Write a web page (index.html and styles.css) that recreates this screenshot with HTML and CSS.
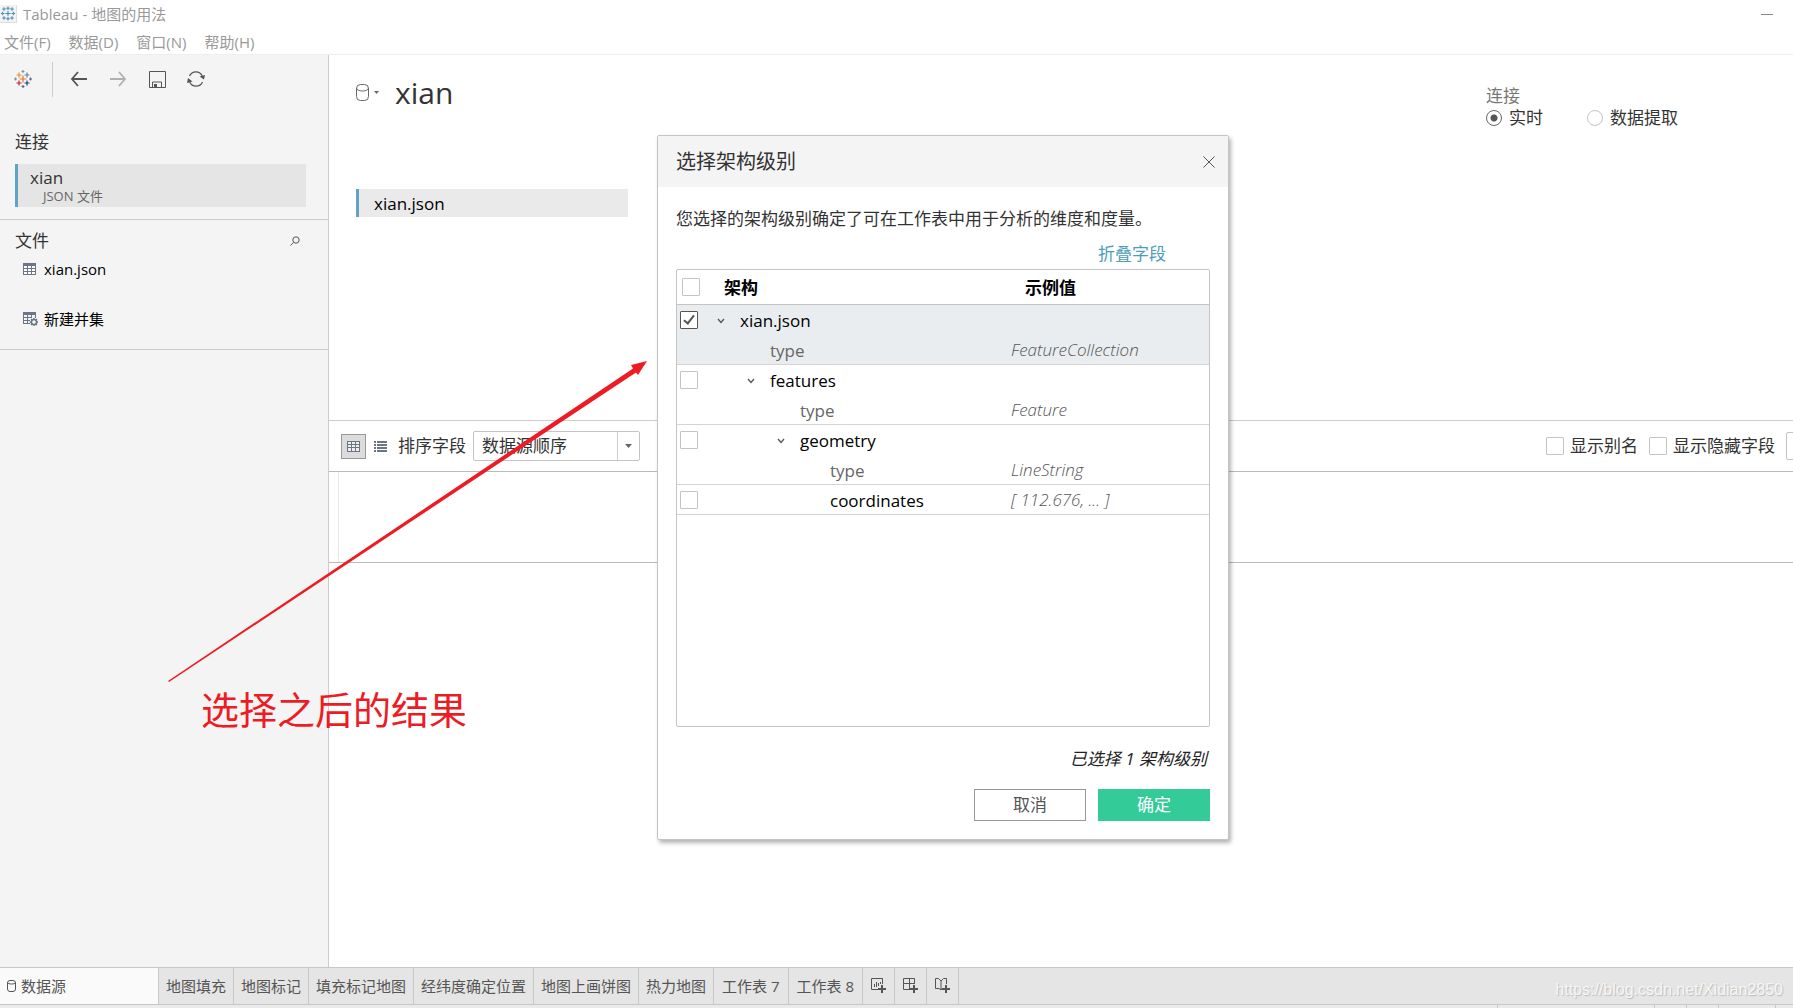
FILE: index.html
```html
<!DOCTYPE html>
<html lang="zh-CN">
<head>
<meta charset="utf-8">
<title>Tableau - 地图的用法</title>
<link rel="stylesheet" href="styles.css">
</head>
<body>
<svg class="defs" aria-hidden="true">
  <symbol id="plus-grid" viewBox="0 0 18 18"><path d="M9 6v6M6 9h6M9 1v4M7 3h4M9 13v4M7 15h4M3 7v4M1 9h4M15 7v4M13 9h4M4.500 2v4M2.500 4h4M13.500 2v4M11.500 4h4M4.500 12v4M2.500 14h4M13.500 12v4M11.500 14h4"/></symbol>
  <symbol id="table" viewBox="0 0 13 12"><path fill="currentColor" d="M0 0h13v12H0z"/><path fill="#fff" d="M1 3h3v2H1zM5 3h3v2H5zM9 3h3v2H9zM1 6h3v2H1zM5 6h3v2H5zM9 6h3v2H9zM1 9h3v2H1zM5 9h3v2H5zM9 9h3v2H9z"/></symbol>
  <symbol id="chevron" viewBox="0 0 8 6"><path fill="none" stroke="#555" stroke-width="1.300" d="M1 1l3 3.500L7 1"/></symbol>
</svg>
<div class="app">
  <header class="titlebar">
    <div class="caption">
      <svg class="app-icon" viewBox="0 0 18 18"><use href="#plus-grid"/></svg>
      <span>Tableau - 地图的用法</span>
      <button class="minimize" aria-label="最小化"></button>
    </div>
    <nav class="menu">
      <a href="#">文件(F)</a><a href="#">数据(D)</a><a href="#">窗口(N)</a><a href="#">帮助(H)</a>
    </nav>
  </header>

  <div class="workspace">
    <aside class="sidebar">
      <div class="tools">
        <button class="tool tool-home" aria-label="开始页面">
          <svg width="18" height="18" viewBox="0 0 18 18" fill="none" stroke-width="1.200">
            <path stroke="#eb912c" d="M5 2.500v5M2.500 5h5"/><path stroke="#e8762c" d="M9 5.500v7M5.500 9h7"/>
            <path stroke="#59879b" d="M13 2.500v5M10.500 5h5"/><path stroke="#c72035" d="M5 10.500v5M2.500 13h5"/>
            <path stroke="#1f447e" d="M13 10.500v5M10.500 13h5"/><path stroke="#7099a5" d="M9 0v3M7.500 1.500h3M1.500 7.500v3M0 9h3"/>
            <path stroke="#5b6591" d="M16.500 7.500v3M15 9h3M9 15v3M7.500 16.500h3"/>
          </svg>
        </button>
        <button class="tool" aria-label="后退"><svg width="18" height="16" viewBox="0 0 18 16" fill="none" stroke="#555" stroke-width="1.800"><path d="M8 1L2 8l6 7M2 8h15"/></svg></button>
        <button class="tool" aria-label="前进"><svg width="18" height="16" viewBox="0 0 18 16" fill="none" stroke="#b0b0b0" stroke-width="1.800"><path d="M10 1l6 7-6 7M16 8H1"/></svg></button>
        <button class="tool" aria-label="保存"><svg width="17" height="17" viewBox="0 0 17 17" fill="none" stroke="#555"><path d="M.5 .5h16v16H.5zM3.500 16v-5h9v5"/><path fill="#555" stroke="none" d="M5 13h3v3H5z"/></svg></button>
        <button class="tool" aria-label="刷新"><svg width="18" height="18" viewBox="0 0 18 18" fill="none" stroke="#555" stroke-width="1.200"><path d="M2.500 6a7 7 0 0 1 12.800 0M15.500 12a7 7 0 0 1-12.800 0"/><path fill="#555" stroke="none" d="M12.500 6.500L18 5l-1 4.500zM5.500 11.500L0 13l1-5z"/></svg></button>
      </div>
      <section class="connections">
        <h2>连接</h2>
        <a class="connection" href="#"><span class="connection-name">xian</span><span class="connection-type">JSON 文件</span></a>
      </section>
      <section class="files">
        <div class="files-head"><h2>文件</h2>
          <button class="search" aria-label="搜索"><svg width="10" height="10" viewBox="0 0 10 10" fill="none" stroke="#555"><circle cx="6" cy="4" r="3.200"/><path d="M3.500 6.500L.5 9.500"/></svg></button></div>
        <a class="file" href="#"><svg width="13" height="12"><use href="#table"/></svg>xian.json</a>
        <a class="file file-union" href="#"><svg width="15" height="14" viewBox="0 0 15 14"><path fill="#6b7585" d="M0 0h13v6h-1V3H9v2H8V3H5v2h4v1H5v2h2v1H5v2h2v1H0zM1 3v2h3V3zM1 6v2h3V6zM1 9v2h3V9z"/><circle cx="11" cy="10" r="2.600" fill="none" stroke="#6b7585" stroke-width="1.500"/><path stroke="#6b7585" stroke-width="1.300" d="M11 5.800v2M11 12.200v2M6.800 10h2M13.200 10h2M8 7l1.400 1.400M12.600 11.600L14 13M14 7l-1.400 1.400M8 13l1.400-1.400"/></svg>新建并集</a>
      </section>
    </aside>

    <main class="main">
      <section class="canvas">
        <div class="source">
          <div class="source-head">
            <button class="source-menu" aria-label="数据源"><svg width="24" height="18" viewBox="0 0 24 18" fill="none" stroke="#666"><rect x=".5" y=".5" width="12" height="16" rx="4"/><path d="M.5 4c0 4 12 4 12 0"/><path fill="#666" stroke="none" d="M18 7h5l-2.500 3z"/></svg></button>
            <h1>xian</h1>
          </div>
          <div class="source-table">xian.json</div>
        </div>
        <fieldset class="mode">
          <legend>连接</legend>
          <label><input type="radio" name="mode" checked>实时</label>
          <label><input type="radio" name="mode">数据提取</label>
        </fieldset>
      </section>
      <div class="gridbar">
        <button class="view view-on" aria-label="预览数据源"><svg width="13" height="11" viewBox="0 0 13 11"><path fill="#6b7585" d="M0 0h13v11H0z"/><path fill="#eee" d="M1 1h3v2H1zM5 1h3v2H5zM9 1h3v2H9zM1 4h3v2H1zM5 4h3v2H5zM9 4h3v2H9zM1 7h3v3H1zM5 7h3v3H5zM9 7h3v3H9z"/></svg></button>
        <button class="view" aria-label="管理元数据"><svg width="13" height="11" viewBox="0 0 13 11"><path fill="#6b7585" d="M0 0h2v2H0zM3 0h10v2H3zM0 3h2v2H0zM3 3h10v2H3zM0 6h2v2H0zM3 6h10v2H3zM0 9h2v2H0zM3 9h10v2H3z"/></svg></button>
        <label for="sort">排序字段</label>
        <span class="select"><select id="sort"><option>数据源顺序</option></select><svg width="7" height="4" viewBox="0 0 7 4"><path fill="#666" d="M0 0h7L3.500 4z"/></svg></span>
        <div class="options">
          <label><input type="checkbox">显示别名</label>
          <label><input type="checkbox">显示隐藏字段</label>
          <input class="rows" type="text" aria-label="行数">
        </div>
      </div>
      <div class="grid"></div>
    </main>
  </div>

  <footer>
    <nav class="tabs">
      <a class="tab tab-on" href="#"><svg width="9" height="12" viewBox="0 0 9 12" fill="none" stroke="#555"><rect x=".5" y=".5" width="8" height="11" rx="2.500"/><path d="M.5 2.500c0 2 8 2 8 0"/></svg>数据源</a>
      <a class="tab" href="#">地图填充</a><a class="tab" href="#">地图标记</a><a class="tab" href="#">填充标记地图</a><a class="tab" href="#">经纬度确定位置</a><a class="tab" href="#">地图上画饼图</a><a class="tab" href="#">热力地图</a><a class="tab tab-sheet" href="#">工作表 7</a><a class="tab tab-sheet" href="#">工作表 8</a>
      <button class="tab tab-new" aria-label="新建工作表"><svg width="16" height="16" viewBox="0 0 16 16" fill="none" stroke="#555"><path d="M7 11.500H.5V.5h11V6M3.500 9V6M5.500 9V4M7.500 8V5M9.500 6V4"/><path stroke-width="2" d="M11 7v8M7 11h8"/></svg></button>
      <button class="tab tab-new" aria-label="新建仪表板"><svg width="16" height="16" viewBox="0 0 16 16" fill="none" stroke="#555"><path d="M7 11.500H.5V.5h11V6M6.500 .5V11M.5 5.500h11"/><path stroke-width="2" d="M11 7v8M7 11h8"/></svg></button>
      <button class="tab tab-new" aria-label="新建故事"><svg width="16" height="16" viewBox="0 0 16 16" fill="none" stroke="#555"><path d="M7 10.500l-1 1.500-2-1.500H.5V.5h3L6 3v9M6 3L8.500 .5h3V6"/><path stroke-width="2" d="M11 7v8M7 11h8"/></svg></button>
      <span class="watermark">https://blog.csdn.net/Xidian2850</span>
    </nav>
    <div class="status"><i class="cell-a"></i><i class="cell-b"></i><i class="cell-b"></i><i class="cell-c"></i><i class="cell-d"></i></div>
  </footer>

  <div class="dialog" role="dialog" aria-labelledby="dialog-title">
    <div class="dialog-head"><h2 id="dialog-title">选择架构级别</h2>
      <button class="close" aria-label="关闭"><svg width="12" height="12" viewBox="0 0 12 12" stroke="#555"><path d="M.5 .5l11 11M11.500 .5l-11 11"/></svg></button></div>
    <div class="dialog-body">
      <p>您选择的架构级别确定了可在工作表中用于分析的维度和度量。</p>
      <a class="collapse" href="#">折叠字段</a>
      <div class="schema">
        <table>
          <thead><tr><th class="pick"><input type="checkbox" aria-label="全选"></th><th class="name">架构</th><th class="sample">示例值</th></tr></thead>
          <tbody>
            <tr class="on"><td class="pick"><input type="checkbox" aria-label="xian.json" checked></td><td class="l1"><svg width="8" height="6"><use href="#chevron"/></svg>xian.json</td><td></td></tr>
            <tr class="on last"><td></td><td class="l2 leaf muted">type</td><td class="value">FeatureCollection</td></tr>
            <tr><td class="pick"><input type="checkbox" aria-label="features"></td><td class="l2"><svg width="8" height="6"><use href="#chevron"/></svg>features</td><td></td></tr>
            <tr class="last"><td></td><td class="l3 leaf muted">type</td><td class="value">Feature</td></tr>
            <tr><td class="pick"><input type="checkbox" aria-label="geometry"></td><td class="l3"><svg width="8" height="6"><use href="#chevron"/></svg>geometry</td><td></td></tr>
            <tr class="last"><td></td><td class="l4 leaf muted">type</td><td class="value">LineString</td></tr>
            <tr class="last"><td class="pick"><input type="checkbox" aria-label="coordinates"></td><td class="l4 leaf">coordinates</td><td class="value">[ 112.676, ... ]</td></tr>
          </tbody>
        </table>
      </div>
      <div class="count">已选择 1 架构级别</div>
      <div class="actions"><button class="btn">取消</button><button class="btn btn-ok">确定</button></div>
    </div>
  </div>

  <svg class="arrow" width="480" height="322" viewBox="0 0 480 322"><path fill="#ed1c24" d="M0 320L465 7.500 463 4 479 0 470 14 468 11.500 1 321z"/></svg>
  <div class="note">选择之后的结果</div>
</div>
</body>
</html>
```
FILE: styles.css
```css
* { box-sizing: border-box; }
body {
  margin: 0;
  font: 17px/24px "Open Sans", "Noto Sans CJK SC", sans-serif;
  color: #333;
  background: #fff;
}
h1, h2, p { margin: 0; font-weight: 400; }
h2 { font-size: 17px; line-height: 24px; }
a { color: inherit; text-decoration: none; }
button { padding: 0; border: 0; background: none; font: inherit; color: inherit; }
svg { display: block; flex: none; }
.defs { position: absolute; width: 0; height: 0; }

input[type="checkbox"], input[type="radio"] {
  appearance: none;
  flex: none;
  width: 18px;
  height: 18px;
  margin: 0;
  border: 1px solid #c4c4c4;
  border-radius: 1px;
  background: #fff;
}
input[type="radio"] { width: 16px; height: 16px; border-radius: 50%; }
input[type="radio"]:checked {
  border-color: #666;
  background: radial-gradient(circle, #555 3px, #fff 4px);
}

.app {
  position: relative;
  display: flex;
  flex-direction: column;
  min-height: 100vh;
  overflow: hidden;
}

.titlebar { border-bottom: 1px solid #eee; font-size: 15px; color: #999; }
.caption { display: flex; align-items: center; height: 28px; gap: 6px; }
.app-icon {
  width: 17px;
  height: 18px;
  border: 1px solid #ddd;
  border-width: 0 1px 1px 0;
  background: #f2f2f2;
  stroke: #4b8cb5;
  stroke-width: 1.200;
}
.minimize { width: 12px; height: 1px; margin: 0 20px 0 auto; background: #888; }
.menu { display: flex; gap: 18px; height: 26px; padding: 2px 4px 0; }

.workspace { display: flex; flex: 1; }
.sidebar { flex: none; width: 329px; border-right: 1px solid #ccc; background: #f4f4f4; }
.tools { display: flex; align-items: center; gap: 21px; height: 48px; padding-left: 14px; }
.tool { display: flex; width: 18px; justify-content: center; }
.tool-home { width: 39px; height: 35px; justify-content: flex-start; align-items: center; border-right: 1px solid #ccc; margin-right: -4px; }
.connections { padding: 27px 22px 12px 15px; border-bottom: 1px solid #ccc; }
.connection { display: block; height: 43px; margin-top: 10px; padding: 3px 12px; border-left: 3px solid #5fa4c4; background: #e5e5e5; }
.connection-name, .connection-type { display: block; }
.connection-name { line-height: 22px; }
.connection-type { padding-left: 13px; font-size: 13px; line-height: 14px; color: #666; }
.files { height: 130px; padding: 9px 15px; border-bottom: 1px solid #ccc; }
.files-head { display: flex; align-items: center; justify-content: space-between; padding-right: 13px; }
.file { display: flex; align-items: center; gap: 8px; padding: 4px 8px 6px; font-size: 15px; color: #000; height: 34px; }
.file svg { color: #6b7585; }
.file-union { margin-top: 16px; gap: 6px; }

.main { flex: 1; min-width: 0; }
.canvas { display: flex; justify-content: space-between; height: 366px; padding: 18px 115px 0 27px; border-bottom: 1px solid #ccc; }
.source-head { display: flex; align-items: center; gap: 15px; height: 40px; }
h1 { font-size: 30px; line-height: 40px; }
.source-table { width: 272px; height: 28px; margin-top: 76px; padding: 3px 15px; border-left: 3px solid #5fa4c4; background: #eaeaea; color: #000; }
.mode { display: flex; flex-wrap: wrap; align-content: flex-start; gap: 0 44px; margin: 8px 0 0; padding: 0; border: 0; }
.mode legend { padding: 0; line-height: 30px; color: #777; }
.mode label { display: flex; align-items: center; gap: 7px; margin-top: -5px; }
.gridbar { display: flex; align-items: center; height: 51px; padding: 0 0 0 12px; border-bottom: 1px solid #bbb; overflow: hidden; }
.gridbar > label { margin: 0 7px 0 3px; }
.view { display: flex; align-items: center; justify-content: center; width: 25px; height: 25px; margin-right: 2px; border: 1px solid transparent; }
.view-on { border-color: #999; background: #dcdcdc; }
.select { position: relative; width: 167px; height: 30px; }
.select select { appearance: none; width: 100%; height: 30px; padding: 0 8px; border: 1px solid #c4c4c4; border-radius: 2px; background: linear-gradient(#ccc, #ccc) 143px 0 / 1px 100% no-repeat #fff; font: inherit; color: inherit; }
.select svg { position: absolute; right: 8px; top: 13px; }
.options { display: flex; align-items: center; gap: 11px; margin-left: auto; }
.options label { display: flex; align-items: center; gap: 6px; }
.rows { width: 120px; height: 28px; margin-right: -113px; border: 1px solid #c4c4c4; border-radius: 2px; }
.grid { height: 91px; padding-left: 9px; border-bottom: 1px solid #bbb; background: linear-gradient(#e8e8e8, #e8e8e8) 9px 0 / 1px 100% no-repeat; }

.tabs { display: flex; height: 38px; border: 1px solid #c8c8c8; border-width: 1px 0; background: #e5e5e5; font-size: 15px; color: #555; }
.tab { display: flex; align-items: center; padding: 0 7px; border-right: 1px solid #c8c8c8; }
.tab-on { width: 159px; gap: 5px; background: #fafafa; }
.tab-sheet { padding: 0 8px; }
.tab-new { width: 32px; justify-content: center; }
.watermark { margin: 10px 10px 0 auto; font: 16px/24px "Liberation Sans", Arial, sans-serif; color: #f6f6f6; text-shadow: 1px 1px 1px #bbb; }
.status { display: flex; justify-content: flex-end; height: 3px; background: #ebebeb; }
.status i { border-left: 1px solid #c8c8c8; }
.cell-a { width: 157px; }
.cell-b { width: 32px; }
.cell-c { width: 57px; }
.cell-d { width: 18px; }

.dialog { position: absolute; left: 657px; top: 135px; width: 572px; border: 1px solid #c4c4c4; border-radius: 2px; background: #fff; box-shadow: 2px 3px 4px rgba(0, 0, 0, .3); }
.dialog-head { display: flex; align-items: center; justify-content: space-between; height: 51px; padding: 0 13px 0 18px; background: #f4f4f4; }
.dialog-head h2 { font-size: 20px; }
.dialog-body { display: flex; flex-direction: column; padding: 20px 18px 18px; }
.collapse { align-self: flex-end; margin: 11px 44px 3px 0; color: #4e9dba; }
.schema { height: 458px; border: 1px solid #c4c4c4; border-radius: 2px; }
table { width: 100%; table-layout: fixed; border-spacing: 0; color: #000; }
th { height: 35px; padding: 2px 0 0; border-bottom: 1px solid #c4c4c4; font-weight: 700; text-align: left; }
th.pick { width: 44px; padding: 0 0 0 5px; }
th.name { width: 290px; padding-left: 3px; }
th.sample { padding-left: 14px; }
td { height: 30px; padding: 0; line-height: 24px; white-space: nowrap; }
td.pick { padding-left: 3px; }
.pick input { display: block; }
td svg { display: inline-block; margin-right: 15px; vertical-align: 3px; }
.last td { border-bottom: 1px solid #d4d4d4; }
.on td { background: #e9edf0; }
.on input { border-color: #555; }
.pick input:checked { display: grid; place-items: center; }
.pick input:checked::before { content: ""; width: 4px; height: 9px; margin-bottom: 3px; border: solid #555; border-width: 0 2px 2px 0; transform: rotate(38deg); }
.l1, .l2, .l3, .l4 { padding-top: 2px; }
.leaf { padding-top: 3px; }
.l1 { padding-left: 0; }
.l2 { padding-left: 26px; }
td.l1 { padding-left: 0; text-indent: -4px; }
td.l2 { padding-left: 26px; }
td.l3 { padding-left: 56px; }
td.l2.leaf { padding-left: 49px; }
td.l3.leaf { padding-left: 79px; }
td.l4.leaf { padding-left: 109px; }
.muted { color: #666; }
.value { font-style: italic; font-weight: 300; color: #555; }
.count { margin-top: 20px; padding-right: 3px; text-align: right; font-style: italic; color: #222; }
.actions { display: flex; justify-content: flex-end; gap: 12px; margin-top: 18px; }
.btn { width: 112px; height: 32px; border: 1px solid #999; background: #fff; color: #555; }
.btn-ok { border-color: #33cc99; background: #33cc99; color: #fff; }

.arrow { position: absolute; left: 168px; top: 361px; }
.note { position: absolute; left: 201px; top: 683px; font-size: 38px; line-height: 52px; color: #ed1c24; white-space: nowrap; }
```
